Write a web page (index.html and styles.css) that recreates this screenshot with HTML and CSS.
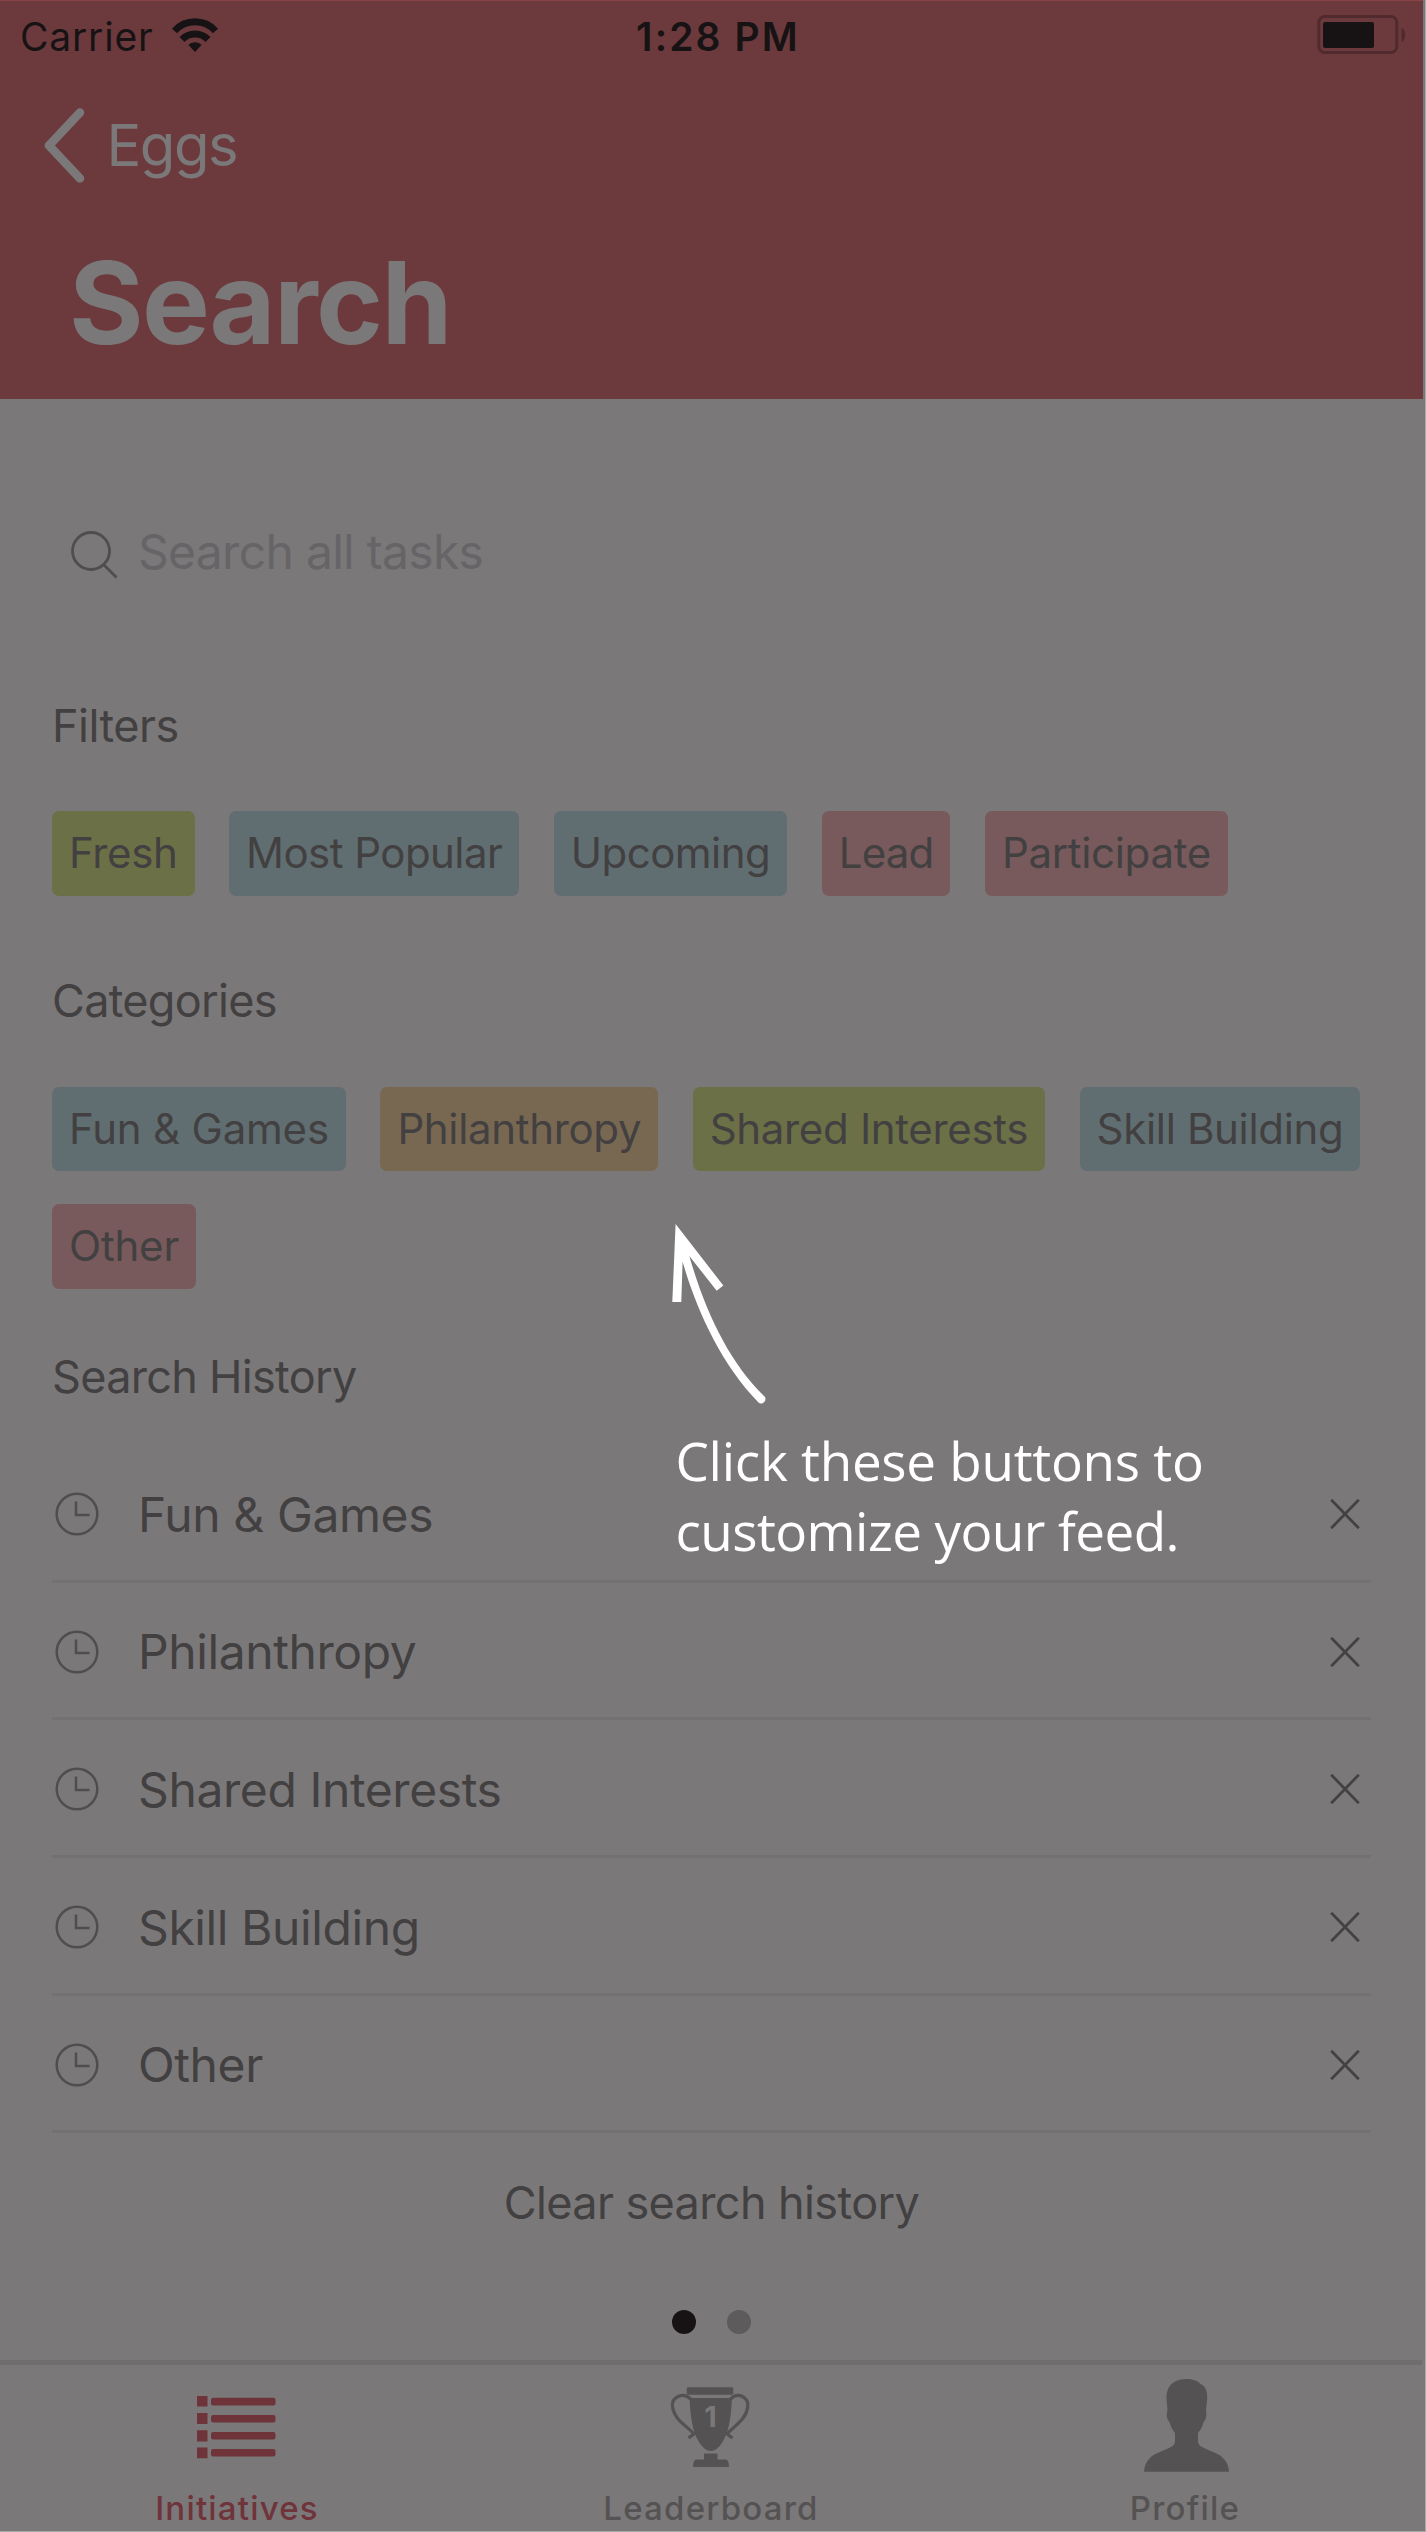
FILE: index.html
```
<!DOCTYPE html>
<html lang="en">
<head>
<meta charset="utf-8">
<title>Search</title>
<link rel="stylesheet" href="styles.css">
</head>
<body>
<svg class="defs" width="0" height="0" aria-hidden="true">
  <symbol id="clock" viewBox="0 0 44 44">
    <circle cx="22" cy="22" r="20.3"/>
    <path d="M21 9.500V23H34.500"/>
  </symbol>
  <symbol id="close" viewBox="0 0 30 30">
    <path d="M1.200 0.800L28.800 29.200M28.800 0.800L1.200 29.200"/>
  </symbol>
</svg>

<div class="screen">
  <header class="header">
    <div class="status">
      <div class="status-left">
        <span class="carrier">Carrier</span>
        <svg class="wifi" viewBox="0 0 50 36" width="50" height="36">
          <path class="wifi-arc" d="M4.500 14C15.500 1.800 34.500 1.800 45.500 14"/>
          <path class="wifi-arc" d="M12 22.500C19 15.200 31 15.200 38 22.500"/>
          <path d="M18.500 28C22 24.300 28 24.300 31.500 28L25 35Z"/>
        </svg>
      </div>
      <span class="time">1:28 PM</span>
      <svg class="battery" viewBox="0 0 90 40" width="90" height="40">
        <rect class="battery-shell" x="1.800" y="1.500" width="78" height="36" rx="6"/>
        <rect class="battery-level" x="6" y="7" width="51" height="26" rx="2"/>
        <path class="battery-cap" d="M84.500 13C89.500 15 89.500 25 84.500 27Z"/>
      </svg>
    </div>
    <nav class="nav">
      <svg class="back" viewBox="0 0 44 76" width="44" height="76">
        <path d="M37 5.500L6 38.500L37 71.500"/>
      </svg>
      <span class="back-label">Eggs</span>
    </nav>
    <h1 class="title">Search</h1>
  </header>

  <main class="content">
    <div class="search">
      <svg class="search-icon" viewBox="0 0 50 50" width="50" height="50">
        <circle cx="21" cy="21" r="18.500"/>
        <path d="M34 35L46.500 47.500"/>
      </svg>
      <span class="placeholder">Search all tasks</span>
    </div>

    <h2 class="heading heading-filters">Filters</h2>
    <div class="chips">
      <span class="chip green">Fresh</span>
      <span class="chip blue tight">Most Popular</span>
      <span class="chip blue tight">Upcoming</span>
      <span class="chip red tighter">Lead</span>
      <span class="chip red">Participate</span>
    </div>

    <h2 class="heading heading-categories">Categories</h2>
    <div class="chips">
      <span class="chip blue loose">Fun &amp; Games</span>
      <span class="chip orange">Philanthropy</span>
      <span class="chip green">Shared Interests</span>
      <span class="chip blue">Skill Building</span>
      <span class="chip red loose">Other</span>
    </div>

    <h2 class="heading heading-history">Search History</h2>
    <ul class="history">
      <li class="entry"><svg class="clock"><use href="#clock"/></svg><span class="entry-text">Fun &amp; Games</span><svg class="close"><use href="#close"/></svg></li>
      <li class="entry"><svg class="clock"><use href="#clock"/></svg><span class="entry-text">Philanthropy</span><svg class="close"><use href="#close"/></svg></li>
      <li class="entry"><svg class="clock"><use href="#clock"/></svg><span class="entry-text">Shared Interests</span><svg class="close"><use href="#close"/></svg></li>
      <li class="entry"><svg class="clock"><use href="#clock"/></svg><span class="entry-text">Skill Building</span><svg class="close"><use href="#close"/></svg></li>
      <li class="entry"><svg class="clock"><use href="#clock"/></svg><span class="entry-text">Other</span><svg class="close"><use href="#close"/></svg></li>
    </ul>
    <div class="clear">Clear search history</div>
    <div class="dots"><i class="dot dot-on"></i><i class="dot"></i></div>
  </main>

  <footer class="tabs">
    <div class="tab tab-on">
      <svg class="tab-icon" viewBox="0 0 100 100" width="100" height="100">
        <path d="M10 24h10.500v10.500H10zM10 41h10.500v11H10zM10 58.200h10.500v11.300H10zM10 75.400h10.500v10.800H10z"/>
        <rect x="24" y="25.800" width="64.500" height="7.600" rx="2"/>
        <rect x="24" y="43" width="64.500" height="7.600" rx="2"/>
        <rect x="24" y="60" width="64.500" height="7.600" rx="2"/>
        <rect x="24" y="77" width="64.500" height="7.600" rx="2"/>
      </svg>
      <span class="tab-label">Initiatives</span>
    </div>
    <div class="tab">
      <svg class="tab-icon" viewBox="0 0 100 100" width="100" height="100">
        <rect x="25.700" y="15.300" width="46.600" height="7.400" rx="1.500"/>
        <path d="M28.500 26H71C70 45 68 60 61.500 70Q56 79 49.800 79Q43.500 79 38 70C31.500 60 29.500 45 28.500 26Z"/>
        <path class="handle" d="M29.500 27C22 19.500 10 25 11.500 35C13.500 48 25 53 33 62L27.500 66M69.500 27C77 19.500 88 25 86.700 35C85 48 74 53 66 62L71.500 66"/>
        <path d="M43 81.500H56.500V87.500H65Q68 88.500 68 95H32Q32 88.500 35 87.500H43Z"/>
        <text class="rank" x="49.500" y="55" text-anchor="middle">1</text>
      </svg>
      <span class="tab-label">Leaderboard</span>
    </div>
    <div class="tab">
      <svg class="tab-icon" viewBox="0 0 100 100" width="100" height="100">
        <path d="M50.500 7C58 6.500 63 9 65.500 12C71 14 72.500 20 72.200 27L71 38C72.200 44 70.500 49 68.500 50C67.500 55 65.500 58 63 61V69Q63 73 67 75C77 80 84 81 89 87Q93.500 92 94 99.700H9Q9.500 92 14 87C19 81 26 80 36 75Q40 73 40 69V61C37.500 58 35.500 54 34.500 50C32 48 31 43 32.500 38L31.500 27C31 15 37 7.500 50.500 7Z"/>
      </svg>
      <span class="tab-label">Profile</span>
    </div>
  </footer>

  <div class="callout">
    <svg class="arrow" viewBox="0 0 110 190" width="110" height="190">
      <path d="M15.600 4L12.300 82H21.300L22.600 41.700C36 88 60 143 98.500 182.500C102 185.500 107 181 105 177C70 143 46 94 29.300 36L56.700 70.700L63.300 65.500Z"/>
    </svg>
    <p class="tip"><span class="tip-first">Click these buttons to</span><span class="tip-second">customize your feed.</span></p>
  </div>
</div>
</body>
</html>
```

FILE: styles.css
```
* { box-sizing: border-box; }

body {
  margin: 0;
  background: #a9a7a8;
}

.defs { display: block; }

.screen {
  position: relative;
  width: 1425px;
  height: 2531px;
  overflow: hidden;
  background: #7b7879;
  color: #424041;
  font-family: Inter, "Liberation Sans", sans-serif;
}

svg { display: block; flex: none; }

/* Header */
.header {
  width: 1423px;
  height: 399px;
  background: #6c3a3d;
  border-top: 1px solid #8a4448;
  color: #7b7879;
}

.status {
  display: grid;
  grid-template-columns: 1fr auto 1fr;
  align-items: center;
  height: 71px;
  padding: 0 16px 0 20px;
  color: #171314;
  font-size: 39px;
  line-height: 70px;
}

.status-left {
  display: flex;
  align-items: center;
  gap: 17px;
}

.carrier { letter-spacing: 0.8px; }
.wifi { margin-top: -4px; fill: #171314; }
.wifi-arc { fill: none; stroke: #171314; stroke-width: 7; }

.time {
  margin-left: 9px;
  font-weight: 600;
  letter-spacing: 2.1px;
}

.battery { justify-self: end; margin-top: -3px; }
.battery-shell { fill: none; stroke: #502a2c; stroke-width: 3; }
.battery-level { fill: #171314; }
.battery-cap { fill: #502a2c; }

.nav {
  display: flex;
  align-items: center;
  height: 145px;
  padding-left: 42.5px;
}

.back {
  fill: none;
  stroke: #7b7879;
  stroke-width: 8.5;
  stroke-linecap: round;
  stroke-linejoin: round;
}

.back-label {
  margin-left: 20px;
  font-size: 58px;
  letter-spacing: -1.5px;
}

.title {
  margin: 0;
  padding-left: 69px;
  font-size: 114px;
  font-weight: 700;
  line-height: 171px;
  letter-spacing: -1.6px;
}

/* Content */
.content { padding: 103px 54px 0 52px; }

.search {
  display: flex;
  align-items: center;
  height: 99px;
  padding-left: 18px;
}

.search-icon {
  margin-top: 7px;
  fill: none;
  stroke: #504d4e;
  stroke-width: 2.8;
}

.placeholder {
  margin-left: 18px;
  color: #676467;
  font-size: 48px;
  letter-spacing: -0.7px;
}

.heading {
  margin: 0;
  font-size: 45px;
  font-weight: 400;
  line-height: 60px;
  letter-spacing: -0.7px;
}

.heading-filters { margin: 95px 0 55px; letter-spacing: -0.5px; }
.heading-categories { margin: 75.5px 0 55.5px; }
.heading-history { margin: 58px 0 38.5px; }

.chips {
  display: flex;
  flex-wrap: wrap;
  gap: 33px 34.5px;
}

.chip {
  height: 84.5px;
  padding: 0 17px;
  border-radius: 7px;
  font-size: 42px;
  line-height: 84px;
  letter-spacing: -0.33px;
  white-space: nowrap;
}

.loose { letter-spacing: -0.2px; }
.tight { letter-spacing: -0.54px; }
.tighter { letter-spacing: -0.8px; }
.green { background: #6c7047; }
.blue { background: #616e71; }
.red { background: #785a5c; }
.orange { background: #796851; }

.history {
  margin: 0;
  padding: 0;
  list-style: none;
}

.entry {
  display: flex;
  align-items: center;
  height: 137.67px;
  padding: 3.5px 11px 0 3px;
  border-bottom: 3.5px solid #747172;
}

.clock {
  width: 44px;
  height: 44px;
  fill: none;
  stroke: #504d4e;
  stroke-width: 2.5;
}

.entry-text {
  flex: 1;
  margin-left: 39px;
  font-size: 48px;
  letter-spacing: -0.4px;
}

.close {
  width: 30px;
  height: 30px;
  fill: none;
  stroke: #434142;
  stroke-width: 2.8;
}

.clear {
  margin-top: 29.5px;
  font-size: 45px;
  line-height: 80px;
  letter-spacing: -0.6px;
  text-align: center;
}

.dots {
  display: flex;
  justify-content: center;
  gap: 31px;
  margin: 67px 0 26px;
}

.dot {
  width: 24px;
  height: 24px;
  border-radius: 50%;
  background: #5e5b5c;
}

.dot-on { background: #171314; }

/* Tab bar */
.tabs {
  display: flex;
  width: 1422px;
  height: 172px;
  border-top: 5px solid #706d6e;
}

.tab {
  display: flex;
  flex: 1;
  flex-direction: column;
  align-items: center;
  padding-top: 7px;
  color: #555253;
  fill: #555253;
}

.tab-on { color: #6f3439; fill: #6f3439; }

.tab-label {
  margin-top: 16px;
  font-size: 33px;
  font-weight: 500;
  line-height: 40px;
  letter-spacing: 1.2px;
}

.handle { fill: none; stroke: #555253; stroke-width: 3.2; }
.rank { fill: #7b7879; font-size: 29px; font-weight: 700; }

/* Coach mark over the screen */
.callout {
  position: absolute;
  top: 1220px;
  left: 660px;
  color: #fff;
  fill: #fff;
}

.tip {
  display: flex;
  flex-direction: column;
  margin: 16px 0 0 15.5px;
  font: 53px/70px "Open Sans", "Noto Sans", sans-serif;
  white-space: nowrap;
}

.tip-first { letter-spacing: -0.27px; }
.tip-second { letter-spacing: -0.57px; }
```
